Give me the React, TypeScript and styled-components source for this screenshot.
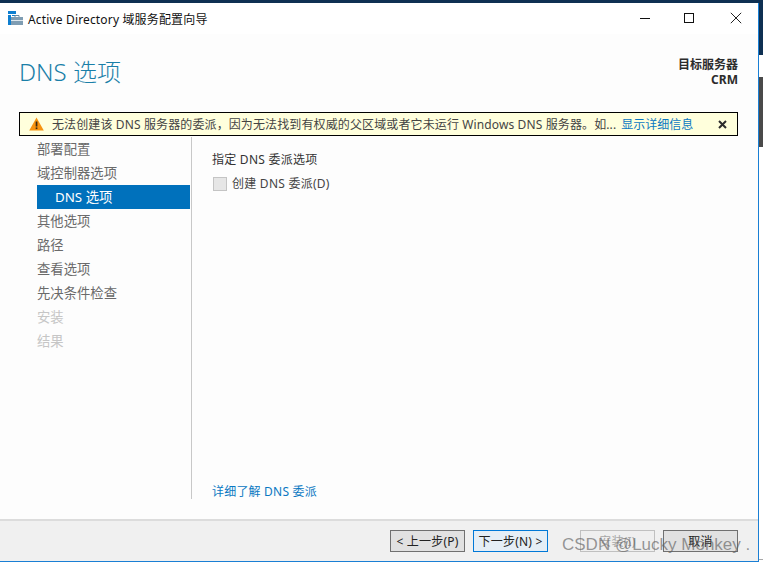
import styled, { createGlobalStyle } from 'styled-components'

const GlobalStyle = createGlobalStyle`
  html, body {
    margin: 0;
    padding: 0;
    background: #ffffff;
  }
  * {
    box-sizing: border-box;
  }
`

const navItems = [
  { label: '部署配置', indent: false, state: 'normal' },
  { label: '域控制器选项', indent: false, state: 'normal' },
  { label: 'DNS 选项', indent: true, state: 'active' },
  { label: '其他选项', indent: false, state: 'normal' },
  { label: '路径', indent: false, state: 'normal' },
  { label: '查看选项', indent: false, state: 'normal' },
  { label: '先决条件检查', indent: false, state: 'normal' },
  { label: '安装', indent: false, state: 'disabled' },
  { label: '结果', indent: false, state: 'disabled' },
]

const App = () => {
  return (
    <Page>
      <GlobalStyle />
      <TopStrip />
      <Middle>
        <Window>
          <TitleBar>
            <TitleLeft>
              <svg width="15" height="15" viewBox="0 0 15 15">
                <rect x="0" y="0" width="8" height="3" fill="#0f7fd0" />
                <rect x="0" y="4" width="3" height="10" fill="#0f7fd0" />
                <rect x="4" y="4" width="5" height="1" fill="#0f7fd0" />
                <path d="M7 6V4.5h4V6" fill="none" stroke="#6a8aa0" strokeWidth="1" />
                <rect x="3" y="6" width="12" height="8" fill="#7f9db3" />
                <rect x="3" y="9" width="12" height="1" fill="#dfe8ee" />
              </svg>
              <TitleText>Active Directory 域服务配置向导</TitleText>
            </TitleLeft>
            <Controls>
              <ControlSlot $width={38}>
                <svg width="12" height="12" viewBox="0 0 12 12">
                  <rect x="1" y="6" width="10" height="1" fill="#111" />
                </svg>
              </ControlSlot>
              <ControlSlot $width={50}>
                <svg width="12" height="12" viewBox="0 0 12 12">
                  <rect x="1.5" y="1.5" width="9" height="9" fill="none" stroke="#111" />
                </svg>
              </ControlSlot>
              <ControlSlot $width={44}>
                <svg width="12" height="12" viewBox="0 0 12 12">
                  <path d="M.8.8l10.4 10.4M11.2.8L.8 11.2" stroke="#222" strokeWidth="1" fill="none" />
                </svg>
              </ControlSlot>
            </Controls>
          </TitleBar>
          <Surface>
            <Header>
              <Heading>DNS 选项</Heading>
              <ServerInfo>
                <div>目标服务器</div>
                <div>CRM</div>
              </ServerInfo>
            </Header>
            <WarningBar>
              <svg width="15" height="14" viewBox="0 0 15 14">
                <path d="M7.5.5L14.8 13.5H.2z" fill="#f7930f" />
                <rect x="6.7" y="4.5" width="1.7" height="5" fill="#3a2a10" />
                <rect x="6.7" y="10.4" width="1.7" height="1.7" fill="#3a2a10" />
              </svg>
              <WarningText>无法创建该 DNS 服务器的委派，因为无法找到有权威的父区域或者它未运行 Windows DNS 服务器。如...</WarningText>
              <WarningLink>显示详细信息</WarningLink>
              <WarningClose>
                <svg width="9" height="9" viewBox="0 0 9 9">
                  <path d="M1 1l7 7M8 1L1 8" stroke="#2b2b2b" strokeWidth="2" fill="none" />
                </svg>
              </WarningClose>
            </WarningBar>
            <Body>
              <Sidebar>
                {navItems.map((item) => (
                  <NavItem key={item.label} $indent={item.indent} $state={item.state}>
                    {item.label}
                  </NavItem>
                ))}
              </Sidebar>
              <Content>
                <div>
                  <SectionLabel>指定 DNS 委派选项</SectionLabel>
                  <CheckRow>
                    <CheckBox />
                    <span>创建 DNS 委派(D)</span>
                  </CheckRow>
                </div>
                <LearnMore>详细了解 DNS 委派</LearnMore>
              </Content>
            </Body>
          </Surface>
          <Footer>
            <WizardButton>&lt; 上一步(P)</WizardButton>
            <WizardButton $primary>下一步(N) &gt;</WizardButton>
            <WizardButton $disabled $gapLeft>安装(I)</WizardButton>
            <WizardButton>取消</WizardButton>
          </Footer>
          <Watermark>CSDN @Lucky Monkey .</Watermark>
        </Window>
        <DesktopEdge />
      </Middle>
      <BottomStrip />
    </Page>
  )
}

export default App

const Page = styled.div`
  width: 763px;
  height: 563px;
  display: flex;
  flex-direction: column;
  overflow: hidden;
  font-family: "Noto Sans", "Noto Sans CJK SC", sans-serif;
  font-size: 12px;
  background: #ffffff;
`

const TopStrip = styled.div`
  height: 3px;
  flex: none;
  background: #0e3052;
`

const Middle = styled.div`
  flex: 1;
  min-height: 0;
  display: flex;
`

const Window = styled.div`
  position: relative;
  width: 759px;
  display: flex;
  flex-direction: column;
  border-right: 1px solid #1a7fd4;
  border-bottom: 1px solid #1a7fd4;
  background: #ffffff;
`

const DesktopEdge = styled.div`
  flex: 1;
  background: linear-gradient(
    to bottom,
    #0e3052 0,
    #0e3052 52px,
    #ffffff 52px,
    #ffffff 74px,
    #4a4a4a 74px,
    #4a4a4a 144px,
    #ffffff 144px,
    #ffffff 556px,
    #a8a8a8 556px,
    #a8a8a8 557px,
    #ffffff 557px
  );
`

const BottomStrip = styled.div`
  height: 1px;
  flex: none;
  background: #ffffff;
`

const TitleBar = styled.div`
  height: 31px;
  flex: none;
  display: flex;
  align-items: center;
  justify-content: space-between;
  padding-left: 8px;
  background: #ffffff;
`

const TitleLeft = styled.div`
  display: flex;
  align-items: center;
  gap: 5px;
`

const TitleText = styled.span`
  color: #111111;
  font-size: 12px;
  letter-spacing: 0.16px;
`

const Controls = styled.div`
  display: flex;
`

const ControlSlot = styled.div<{ $width: number }>`
  width: ${(p) => p.$width}px;
  height: 31px;
  padding-bottom: 2px;
  display: flex;
  align-items: center;
  justify-content: center;
`

const Surface = styled.div`
  flex: 1;
  min-height: 0;
  display: flex;
  flex-direction: column;
  background: #fdfdfd;
  border-bottom: 2px solid #dcdcdc;
`

const Header = styled.div`
  height: 78px;
  flex: none;
  display: flex;
  justify-content: space-between;
  align-items: flex-start;
  padding: 20px 20px 0 19px;
`

const Heading = styled.h1`
  margin: 0;
  font-size: 24px;
  line-height: 36px;
  font-weight: 300;
  color: #1a7fa8;
`

const ServerInfo = styled.div`
  margin-top: 3px;
  text-align: right;
  font-weight: 700;
  line-height: 15px;
  color: #2c2c2c;
`

const WarningBar = styled.div`
  height: 24px;
  flex: none;
  margin: 0 20px 0 19px;
  padding: 0 10px 0 9px;
  display: flex;
  align-items: center;
  background: #ffffdc;
  border: 1px solid #000000;
`

const WarningText = styled.span`
  margin-left: 8px;
  color: #444444;
  white-space: nowrap;
  letter-spacing: 0.12px;
`

const WarningLink = styled.span`
  margin-left: 5px;
  color: #0a78c2;
  white-space: nowrap;
`

const WarningClose = styled.span`
  margin-left: auto;
  display: flex;
`

const Body = styled.div`
  flex: 1;
  min-height: 0;
  display: flex;
  padding: 1px 0 20px 37px;
`

const Sidebar = styled.nav`
  width: 155px;
  flex: none;
  padding-right: 1px;
  border-right: 1px solid #c8c8c8;
`

const navColor = (state: string) => {
  if (state === 'active') return '#ffffff'
  if (state === 'disabled') return '#c6c6c6'
  return '#6a6a6a'
}

const NavItem = styled.div<{ $indent: boolean; $state: string }>`
  height: 24px;
  line-height: 24px;
  font-size: 13.33px;
  padding-left: ${(p) => (p.$indent ? '18px' : '0')};
  color: ${(p) => navColor(p.$state)};
  background: ${(p) => (p.$state === 'active' ? '#0071bc' : 'transparent')};
`

const Content = styled.div`
  flex: 1;
  display: flex;
  flex-direction: column;
  justify-content: space-between;
  padding: 14px 0 0 20px;
`

const SectionLabel = styled.div`
  line-height: 18px;
  letter-spacing: 0.25px;
  color: #333333;
`

const CheckRow = styled.div`
  margin-top: 6px;
  display: flex;
  align-items: center;
  gap: 5px;
  padding-left: 1px;
  line-height: 18px;
  letter-spacing: 0.25px;
  color: #444444;
`

const CheckBox = styled.span`
  width: 14px;
  height: 14px;
  flex: none;
  background: #e6e6e6;
  border: 1px solid #c4c4c4;
`

const LearnMore = styled.div`
  line-height: 18px;
  margin-bottom: -2px;
  letter-spacing: 0.2px;
  color: #0a78c2;
`

const Footer = styled.div`
  height: 40px;
  flex: none;
  display: flex;
  align-items: center;
  justify-content: flex-end;
  gap: 8px;
  padding: 0 20px 0 0;
  background: #f0f0f0;
`

const WizardButton = styled.div<{ $primary?: boolean; $disabled?: boolean; $gapLeft?: boolean }>`
  width: 75px;
  height: 22px;
  margin-left: ${(p) => (p.$gapLeft ? '24px' : '0')};
  display: flex;
  align-items: center;
  justify-content: center;
  letter-spacing: 0.2px;
  border: 1px solid ${(p) => (p.$primary ? '#0078d7' : p.$disabled ? '#c0c0c0' : '#707070')};
  background: ${(p) => (p.$primary ? '#e5eef6' : p.$disabled ? '#efefef' : '#e1e1e1')};
  color: ${(p) => (p.$disabled ? '#a8a8a8' : '#222222')};
`

const Watermark = styled.div`
  position: absolute;
  left: 562px;
  bottom: 6px;
  font-family: "Liberation Sans", sans-serif;
  font-size: 17px;
  line-height: 20px;
  white-space: nowrap;
  color: rgba(95, 95, 95, 0.65);
`
